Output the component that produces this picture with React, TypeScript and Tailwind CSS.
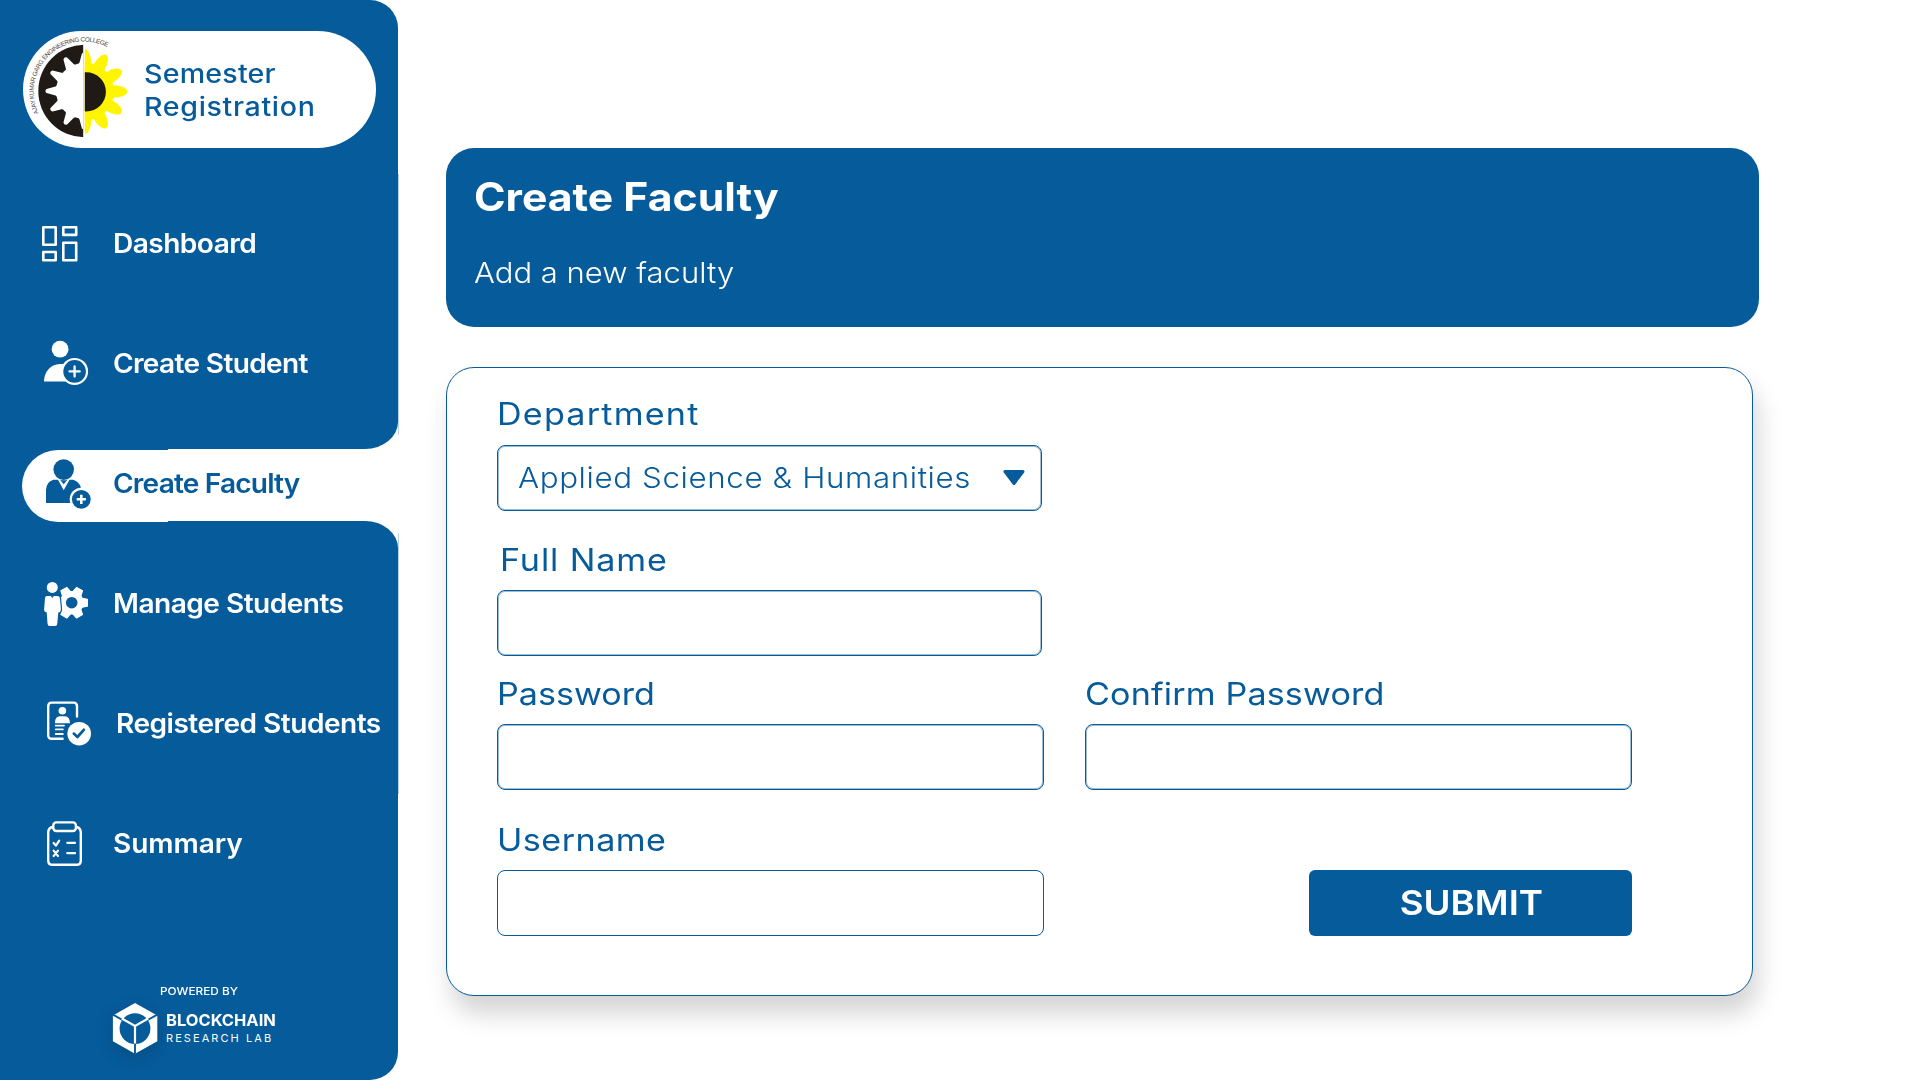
import React from "react";

const BLUE = "#065b9b";

function CollegeLogo() {
  const teeth = [90, 120, 150, 180, 210, 240, 270];
  const petals = [-90, -60, -30, 0, 30, 60, 90];
  return (
    <svg className="h-[117px] w-[112px] shrink-0" viewBox="23 31 112 117">
      <defs>
        <path id="arc" d="M38.6 113.2 A50.3 50.3 0 0 1 108 47.5" />
        <clipPath id="left">
          <rect x="23" y="31" width="60.2" height="117" />
        </clipPath>
        <clipPath id="right">
          <rect x="84.8" y="31" width="50" height="117" />
        </clipPath>
      </defs>
      <text fontSize="6.3" fill="#4a4646" fontFamily="Liberation Sans, sans-serif">
        <textPath href="#arc" textLength="125" lengthAdjust="spacing">
          AJAY KUMAR GARG ENGINEERING COLLEGE
        </textPath>
      </text>
      <g clipPath="url(#left)">
        <circle cx="84.5" cy="91" r="46.2" fill="#201a17" />
        <circle cx="84" cy="91" r="28" fill="#fff" />
        {teeth.map((a) => (
          <path
            key={a}
            transform={`rotate(${a} 84 91)`}
            d="M108 84 L112.5 86.5 L121.5 88.9 Q123.6 91 121.5 93.1 L112.5 95.5 L108 98 Z"
            fill="#fff"
          />
        ))}
      </g>
      <g clipPath="url(#right)">
        <circle cx="85" cy="91.5" r="29" fill="#fff500" />
        {petals.map((a) => (
          <ellipse
            key={a}
            cx="113.5"
            cy="91.5"
            rx="13.8"
            ry="6.2"
            transform={`rotate(${a} 85 91.5)`}
            fill="#fff500"
          />
        ))}
        <circle cx="86.3" cy="91.8" r="19.6" fill="#201a17" />
      </g>
    </svg>
  );
}

const iconClass = "h-14 w-14 shrink-0";

function DashboardIcon() {
  return (
    <svg className={iconClass} viewBox="0 0 56 56" fill="none" stroke="#fff" strokeWidth="2.6" strokeLinejoin="round">
      <rect x="3.3" y="12.3" width="12.4" height="17.4" />
      <rect x="23.3" y="12.3" width="12.9" height="7.6" />
      <rect x="3.3" y="37" width="12.4" height="8.2" />
      <rect x="23.3" y="27.7" width="12.9" height="17.5" />
    </svg>
  );
}

function CreateStudentIcon() {
  return (
    <svg className={iconClass} viewBox="0 0 56 56" fill="#fff">
      <circle cx="20.1" cy="14.2" r="8.4" />
      <path d="M4 46.5 C4 37.5 10 28.9 20 28.9 H27 V46.5 Z" />
      <circle cx="34.6" cy="36.4" r="12.4" fill={BLUE} stroke="#fff" strokeWidth="2.2" />
      <path d="M34.6 31.3 V41.5 M29.5 36.4 H39.7" stroke="#fff" strokeWidth="2.3" strokeLinecap="round" />
    </svg>
  );
}

function CreateFacultyIcon() {
  return (
    <svg className={iconClass} viewBox="0 0 56 56" fill={BLUE}>
      <circle cx="23.7" cy="14.6" r="10.3" />
      <path d="M6 48 V35 Q6 27 13.5 24.7 H18 L23.7 35.3 L29.5 24.7 H33 Q38 26 40.7 31.5 V48 Z" />
      <path d="M19.8 24.5 Q23.7 26.2 27.6 24.5 L23.7 29.2 Z" />
      <circle cx="41.3" cy="44.3" r="11.6" fill="#fff" />
      <circle cx="41.3" cy="44.3" r="9.4" />
      <path d="M41.3 39.7 V48.9 M36.7 44.3 H45.9" stroke="#fff" strokeWidth="2.6" />
    </svg>
  );
}

function ManageStudentsIcon() {
  return (
    <svg className={iconClass} viewBox="0 0 56 56" fill="#fff">
      <g stroke="#fff" strokeWidth="1.2" strokeLinejoin="round">
        <circle cx="31.7" cy="27.7" r="11.2" />
        {[0, 60, 120, 240, 300].map((a) => (
          <path key={a} transform={`rotate(${a} 31.7 27.7)`} d="M41 23 L47.4 24.3 V31.1 L41 32.4 Z" />
        ))}
      </g>
      <circle cx="31.7" cy="27.7" r="5.8" fill={BLUE} />
      <path
        d="M7 21 H17.6 Q19.6 21 19.9 23 L20.9 34 Q21 37 18.3 37.6 L17.3 48.5 Q17.2 51 15 51 H9.8 Q7.6 51 7.5 48.5 L6.7 37.2 Q4 37 4.1 34.5 L5 23 Q5.2 21 7 21 Z"
        stroke={BLUE}
        strokeWidth="2.4"
        paintOrder="stroke"
      />
      <path d="M10.6 20.8 L12.3 23 L14 20.8 Z" fill={BLUE} />
      <circle cx="12.3" cy="12.4" r="5.5" />
    </svg>
  );
}

function RegisteredStudentsIcon() {
  return (
    <svg className={iconClass} viewBox="0 0 56 56" fill="none" stroke="#fff" strokeWidth="2.4" strokeLinecap="round">
      <path d="M37 21.5 V11.2 Q37 7.6 33.4 7.6 H11.8 Q8.2 7.6 8.2 11.2 V40 Q8.2 43.8 11.8 43.8 H22.6" />
      <circle cx="22.4" cy="15.8" r="3.8" fill="#fff" stroke="none" />
      <path d="M14.8 28.3 Q15 21.3 20 21.3 H24.8 Q29.8 21.3 30 28.3 Z" fill="#fff" stroke="none" />
      <path d="M15.8 30.6 H24 M15.8 34.4 H22.8 M15.8 39 H22.8" strokeWidth="1.9" />
      <circle cx="39.2" cy="38.7" r="11.8" fill="#fff" stroke="none" />
      <path d="M33.8 38.6 L37.4 42 L43.8 34.8" stroke={BLUE} strokeWidth="2.7" strokeLinejoin="round" />
    </svg>
  );
}

function SummaryIcon() {
  return (
    <svg className={iconClass} viewBox="0 0 56 56" fill="none" stroke="#fff" strokeWidth="2.4" strokeLinecap="round" strokeLinejoin="round">
      <path d="M12.6 12 Q8.2 13 8.2 17.5 V45.5 Q8.2 49.8 12.5 49.8 H36.5 Q40.8 49.8 40.8 45.5 V17.5 Q40.8 13 36.4 12" />
      <rect x="13.3" y="7.4" width="22.6" height="8.6" rx="3" />
      <path d="M13.6 28 L15.9 30.6 L19.2 25.6 M13.6 35.6 L18 41 M18 35.6 L13.6 41" strokeWidth="2.2" />
      <path d="M27.2 27.8 H35 M27.2 38.2 H35" strokeWidth="2.2" />
    </svg>
  );
}

function LabLogo() {
  return (
    <svg className="h-[54px] w-[46px] overflow-visible drop-shadow-[0_5px_8px_rgba(0,0,0,0.16)]" viewBox="112 1001 46 54">
      <path d="M135 1003 L157.3 1015.6 V1041.2 L135 1053.8 L112.9 1041.2 V1015.6 Z" fill="#fff" />
      <path d="M112.5 1014.4 L135 1027 L157.8 1014.4 M135 1027 V1055" stroke={BLUE} strokeWidth="1.9" fill="none" />
      <circle cx="135" cy="1028.6" r="15.4" fill={BLUE} />
      <path d="M121.8 1018.5 L135 1026 L148.2 1018.5 M135 1026 V1043.6" stroke="#fff" strokeWidth="2.2" fill="none" />
    </svg>
  );
}

const navItems = [
  { label: "Dashboard", Icon: DashboardIcon, text: "tracking-[-0.52px]" },
  { label: "Create Student", Icon: CreateStudentIcon, text: "tracking-[-0.64px]" },
  { label: "Create Faculty", Icon: CreateFacultyIcon, text: "tracking-[-0.78px]", active: true },
  { label: "Manage Students", Icon: ManageStudentsIcon, text: "tracking-[-0.5px]" },
  { label: "Registered Students", Icon: RegisteredStudentsIcon, text: "ml-[3px] tracking-[-0.5px]" },
  { label: "Summary", Icon: SummaryIcon, text: "tracking-[-0.1px]" },
];

function ActiveTab() {
  return (
    <div className="absolute top-[27px] right-0 left-[22px] h-[72px] rounded-l-full bg-white">
      <div className="absolute right-0 -top-px h-px w-[230px] bg-white" />
      <div className="absolute right-0 bottom-0 h-px w-[230px] bg-[#065b9b]" />
      <div className="absolute right-0 -top-[28px] h-[27px] w-[33px] bg-white">
        <div className="h-full w-full rounded-br-[100%] bg-[#065b9b]" />
      </div>
      <div className="absolute right-0 -bottom-[26px] h-[27px] w-[33px] bg-white">
        <div className="h-full w-full rounded-tr-[100%] bg-[#065b9b]" />
      </div>
    </div>
  );
}

function Sidebar() {
  return (
    <aside className="relative flex h-[1080px] w-[398px] shrink-0 flex-col rounded-r-[28px] bg-[#065b9b] text-white">
      <div className="absolute top-[174px] -right-px h-[261px] w-px bg-[#b9d0e3]" />
      <div className="absolute top-[533px] -right-px h-[261px] w-px bg-[#b9d0e3]" />
      <div className="mt-[31px] ml-[23px] flex h-[117px] w-[353px] items-center rounded-full bg-white">
        <CollegeLogo />
        <div className="ml-[9px] text-[26px] leading-[33px] font-medium text-[#065b9b]">
          <div className="origin-left scale-x-[1.1] tracking-[0.19px]">Semester</div>
          <div className="origin-left scale-x-[1.1] tracking-[0.6px]">Registration</div>
        </div>
      </div>
      <nav className="mt-[35px]">
        {navItems.map(({ label, Icon, text, active }) => (
          <div key={label} className="relative flex h-[120px] items-center pl-10">
            {active && <ActiveTab />}
            <a
              className={
                active
                  ? "relative flex items-center gap-[17px] font-semibold text-[#065b9b]"
                  : "relative flex items-center gap-[17px] font-semibold"
              }
            >
              <Icon />
              <span className={"inline-block origin-left scale-x-[1.06] text-[26.5px] leading-8 whitespace-nowrap " + text}>
                {label}
              </span>
            </a>
          </div>
        ))}
      </nav>
      <div className="mt-[78px] ml-[112px]">
        <div className="ml-12 h-5 origin-left scale-x-[1.075] text-[11px] leading-5 font-medium">POWERED BY</div>
        <div className="flex">
          <LabLogo />
          <div className="ml-2 pt-[9px]">
            <div className="h-5 origin-left scale-x-[1.03] text-[16px] leading-5 font-bold">BLOCKCHAIN</div>
            <div className="h-4 text-[11px] leading-4 tracking-[2.08px]">RESEARCH LAB</div>
          </div>
        </div>
      </div>
    </aside>
  );
}

function Field({
  label,
  labelClass = "tracking-normal",
  boxClass,
  children,
}: {
  label: string;
  labelClass?: string;
  boxClass: string;
  children?: React.ReactNode;
}) {
  return (
    <label className="block">
      <span
        className={
          "mb-2.5 block h-10 w-max origin-left scale-x-[1.1] text-[31px] leading-10 whitespace-nowrap " + labelClass
        }
      >
        {label}
      </span>
      <div className={"flex h-[66px] items-center rounded-lg border border-[#065b9b] " + boxClass}>{children}</div>
    </label>
  );
}

export default function App() {
  return (
    <div className="flex h-[1080px] w-[1920px] overflow-hidden bg-white font-['Inter',sans-serif]">
      <Sidebar />
      <main className="pt-[148px] pl-12">
        <header className="h-[179px] w-[1313px] rounded-[28px] bg-[#065b9b] pt-[25px] pl-7 text-white">
          <h1 className="h-12 w-max origin-left scale-x-[1.095] text-[39px] leading-[48px] font-bold">Create Faculty</h1>
          <p className="mt-8 h-10 w-max origin-left scale-x-[1.07] text-[29px] leading-10 font-[350]">
            Add a new faculty
          </p>
        </header>
        <form className="mt-10 h-[629px] w-[1307px] rounded-[28px] border border-[#065b9b] bg-white pt-[26px] pl-[50px] text-[#065b9b] shadow-[5px_18px_24px_rgba(0,0,0,0.17)]">
          <Field
            label="Department"
            labelClass="pb-px mb-[11px] tracking-[1.1px]"
            boxClass="w-[545px] pl-5 shadow-[inset_0_0_0_1px_#9bbdd7]"
          >
            <span className="inline-block w-[420px] origin-left scale-x-[1.08] text-[29px] leading-10 font-light tracking-[0.56px] whitespace-nowrap">
              Applied Science &amp; Humanities
            </span>
            <svg className="ml-[65px] h-4 w-[22px]" viewBox="0 0 22 16">
              <path d="M2 1.5 H20 L11 13.5 Z" fill={BLUE} stroke={BLUE} strokeWidth="3" strokeLinejoin="round" />
            </svg>
          </Field>
          <div className="mt-[29px]">
            <Field
              label="Full Name"
              labelClass="ml-[3px] tracking-[0.8px]"
              boxClass="w-[545px] shadow-[inset_0_0_0_1px_#9bbdd7]"
            />
          </div>
          <div className="mt-[18px] flex gap-[41px]">
            <Field label="Password" boxClass="w-[547px] shadow-[inset_0_0_0_1px_#9bbdd7]" />
            <Field
              label="Confirm Password"
              labelClass="tracking-[0.14px]"
              boxClass="w-[547px] shadow-[inset_0_0_0_1px_#9bbdd7]"
            />
          </div>
          <div className="mt-[30px] flex items-end">
            <Field label="Username" labelClass="tracking-[0.43px]" boxClass="w-[547px]" />
            <button
              type="button"
              className="ml-[265px] h-[66px] w-[323px] rounded-md bg-[#065b9b] pt-px pl-0.5 text-[33.5px] font-semibold text-white"
            >
              <span className="inline-block scale-x-[1.096]">SUBMIT</span>
            </button>
          </div>
        </form>
      </main>
    </div>
  );
}
